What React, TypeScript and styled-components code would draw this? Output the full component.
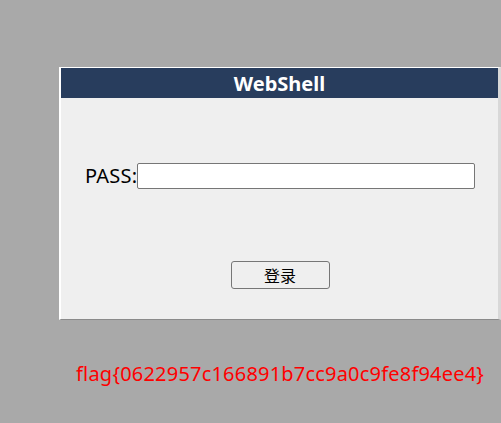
import React from "react";
import styled, { createGlobalStyle } from "styled-components";

const Global = createGlobalStyle`
  html, body {
    margin: 0;
    padding: 0;
    background: #a9a9a9;
    font-family: "Noto Sans", "Noto Sans CJK SC", sans-serif;
  }
`;

const Page = styled.div`
  padding: 67px 0 0 59px;
  min-height: 423px;
  box-sizing: border-box;
`;

const Panel = styled.div`
  width: 442px;
  box-sizing: border-box;
  background: #efefef;
  border-top: 1px solid #ffffff;
  border-left: 2px solid #ffffff;
  border-right: 3px solid #d8d8d8;
  border-bottom: 1px solid #8a8a8a;
`;

const Header = styled.div`
  height: 30px;
  background: #283d5d;
  color: #ffffff;
  font-weight: bold;
  font-size: 20px;
  display: flex;
  align-items: center;
  justify-content: center;
`;

const Body = styled.div`
  padding: 65px 23px 30px 24px;
  display: flex;
  flex-direction: column;
  align-items: center;
`;

const Row = styled.div`
  display: flex;
  align-items: center;
  width: 100%;
  height: 26px;
`;

const Label = styled.label`
  font-size: 20px;
  line-height: 26px;
  color: #000;
  flex: 0 0 52px;
  white-space: nowrap;
  letter-spacing: 0.2px;
`;

const Input = styled.input`
  flex: 1;
  height: 26px;
  box-sizing: border-box;
  border: 1px solid #767676;
  border-radius: 2px;
  background: #fff;
  padding: 0 3px;
  margin: 0;
`;

const Button = styled.button`
  margin-top: 72px;
  width: 99px;
  height: 28px;
  box-sizing: border-box;
  border: 1px solid #767676;
  border-radius: 3px;
  background: #efefef;
  font-family: "Noto Sans CJK SC", sans-serif;
  font-size: 16px;
  color: #000;
  padding: 0;
  display: flex;
  align-items: center;
  justify-content: center;
`;

const Flag = styled.div`
  margin: 41px 0 0 17px;
  color: #ff0000;
  font-size: 20px;
  line-height: 26px;
  letter-spacing: 0.2px;
`;

export default function App() {
  return (
    <>
      <Global />
      <Page>
        <Panel>
          <Header>WebShell</Header>
          <Body>
            <Row>
              <Label>PASS:</Label>
              <Input type="password" />
            </Row>
            <Button>登录</Button>
          </Body>
        </Panel>
        <Flag>flag{"{"}0622957c166891b7cc9a0c9fe8f94ee4{"}"}</Flag>
      </Page>
    </>
  );
}
